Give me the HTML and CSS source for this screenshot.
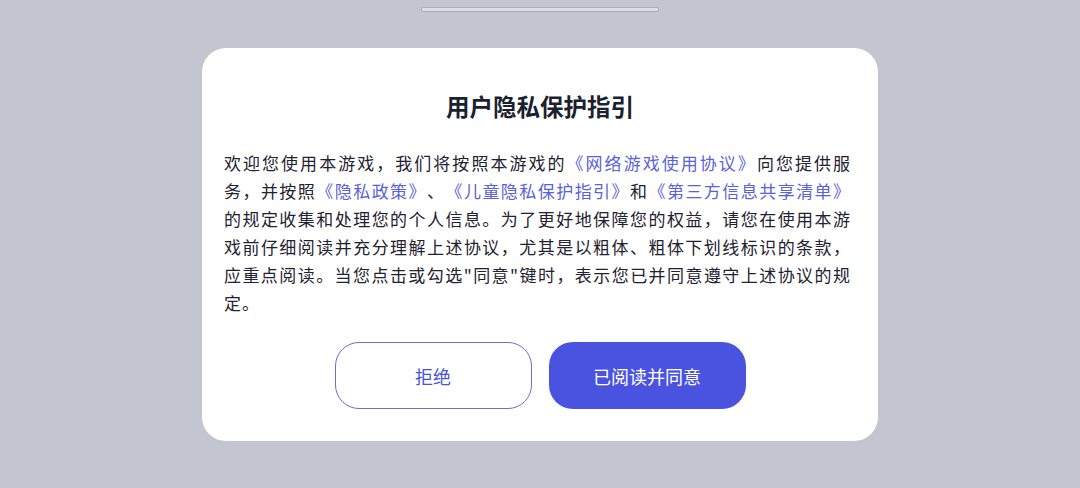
FILE: index.html
```html
<!DOCTYPE html>
<html>

<head>
    <title>用户隐私保护指引</title>
    <link rel="stylesheet" href="styles.css">
</head>

<body>
    <div class="handle"></div>
    <section class="dialog">
        <h1 class="title">用户隐私保护指引</h1>
        <p class="content">欢迎您使用本游戏，我们将按照本游戏的<a href="#">《网络游戏使用协议》</a>向您提供服务，并按照<a href="#">《隐私政策》</a>、<a href="#">《儿童隐私保护指引》</a>和<a href="#">《第三方信息共享清单》</a>的规定收集和处理您的个人信息。为了更好地保障您的权益，请您在使用本游戏前仔细阅读并充分理解上述协议，尤其是以粗体、粗体下划线标识的条款，应重点阅读。当您点击或勾选"同意"键时，表示您已并同意遵守上述协议的规定。</p>
        <div class="actions">
            <button class="btn btn-reject">拒绝</button>
            <button class="btn btn-agree">已阅读并同意</button>
        </div>
    </section>
</body>

</html>
```

FILE: styles.css
```css
* {
    box-sizing: border-box;
}

body {
    margin: 0;
    height: 488px;
    background: #c3c6d1;
    font-family: "Noto Sans CJK SC", "Noto Sans", sans-serif;
    display: flex;
    flex-direction: column;
    align-items: center;
    overflow: hidden;
}

.handle {
    width: 238px;
    height: 5px;
    margin-top: 7px;
    background: #dcdee5;
    border: 1px solid #a9acb9;
    border-radius: 2px;
}

.dialog {
    width: 676px;
    margin-top: 36px;
    background: #fff;
    border-radius: 24px;
    padding: 42px 22px 32px;
    display: flex;
    flex-direction: column;
    align-items: center;
}

.title {
    margin: 0 0 27px;
    font-size: 23.5px;
    line-height: 32px;
    font-weight: 700;
    color: #1b1f30;
}

.content {
    align-self: flex-start;
    margin: 0 0 25px;
    width: 627px;
    font-size: 17px;
    letter-spacing: 1px;
    line-height: 28px;
    color: #1f2231;
    text-align: justify;
    text-spacing-trim: space-all;
}

.content a {
    color: #5a62da;
    text-decoration: none;
}

.actions {
    display: flex;
    gap: 17px;
}

.btn {
    width: 197px;
    height: 67px;
    border-radius: 24px;
    font-family: inherit;
    font-size: 18px;
    cursor: pointer;
}

.btn-reject {
    background: #fff;
    color: #4a54d6;
    border: 1px solid #6a6fd0;
}

.btn-agree {
    background: #4953e0;
    color: #fff;
    border: none;
}
```
